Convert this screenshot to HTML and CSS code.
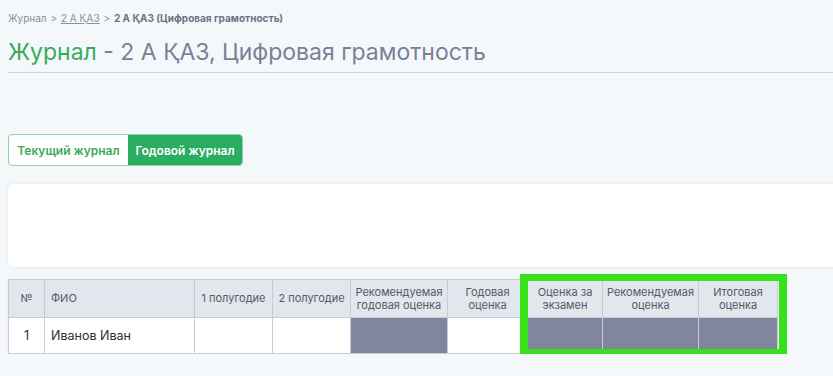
FILE: index.html
```html
<!DOCTYPE html>
<html>
	<head>
		<meta charset="utf-8" />
		<meta name="viewport" content="width=device-width, initial-scale=1">
		<title>Журнал</title>
		<link rel="stylesheet" href="styles.css">
	</head>
	<body>
		<div class="page">
			<div class="crumbs">
				<a href="">Журнал</a>
				<span class="sep">&gt;</span>
				<a href="" class="under">2 А ҚАЗ</a>
				<span class="sep">&gt;</span>
				<b>2 А ҚАЗ (Цифровая грамотность)</b>
			</div>
			<h1 class="title"><span class="green">Журнал</span> - 2 А ҚАЗ, Цифровая грамотность</h1>

			<div class="tabs">
				<a href="" class="tab">Текущий журнал</a>
				<a href="" class="tab active">Годовой журнал</a>
			</div>

			<div class="card"></div>

			<div class="wrap">
				<table class="journal">
					<colgroup>
						<col style="width:36px">
						<col style="width:150px">
						<col style="width:78px">
						<col style="width:78px">
						<col style="width:97px">
						<col style="width:80px">
						<col style="width:75px">
						<col style="width:96px">
						<col style="width:79px">
					</colgroup>
					<tr>
						<th>№</th>
						<th class="c-fio">ФИО</th>
						<th>1 полугодие</th>
						<th>2 полугодие</th>
						<th>Рекомендуемая годовая оценка</th>
						<th>Годовая оценка</th>
						<th>Оценка за экзамен</th>
						<th>Рекомендуемая оценка</th>
						<th>Итоговая оценка</th>
					</tr>
					<tr>
						<td class="c-num">1</td>
						<td class="c-fio">Иванов Иван</td>
						<td></td>
						<td></td>
						<td class="gray"></td>
						<td></td>
						<td class="gray"></td>
						<td class="gray"></td>
						<td class="gray"></td>
					</tr>
				</table>
				<div class="mark"></div>
			</div>
		</div>
	</body>
</html>
```

FILE: styles.css
```css
html,body{
	margin: 0;
	padding: 0;
}
body{
	background: #f5f8fb;
	font-family: Inter, "Noto Sans", sans-serif;
	color: #333;
	overflow: hidden;
}
a{
	text-decoration: none;
	color: inherit;
}
.page{
	padding: 12px 0 0 8px;
}
.crumbs{
	font-size: 10px;
	line-height: 12px;
	color: #8a8f9b;
}
.crumbs .sep{
	margin: 0 1px;
}
.crumbs .under{
	text-decoration: underline;
}
.crumbs b{
	color: #6e7383;
	font-weight: 700;
}
.title{
	margin: 14px 0 0;
	padding-bottom: 6px;
	font-size: 23px;
	line-height: 28px;
	font-weight: 400;
	color: #7b8096;
	border-bottom: 1px solid #cfd3db;
}
.green{
	color: #3aaa5a;
}
.tabs{
	display: flex;
	width: 235px;
	margin-top: 61px;
	height: 32px;
	box-sizing: border-box;
	border: 1px solid #8fd5a8;
	border-radius: 4px;
	overflow: hidden;
	background: #fff;
}
.tab{
	display: flex;
	align-items: center;
	justify-content: center;
	font-size: 12px;
	font-weight: 600;
	color: #3aaa5a;
	width: 119px;
}
.tab.active{
	flex: 1;
	background: #2aad61;
	color: #fff;
}
.card{
	margin-top: 18px;
	margin-right: -20px;
	height: 83px;
	background: #fff;
	border-radius: 5px;
	box-shadow: 0 0 4px rgba(0,0,0,0.08);
}
.wrap{
	position: relative;
	margin-top: 12px;
}
.journal{
	table-layout: fixed;
	width: 769px;
	border-collapse: collapse;
	background: #fff;
	font-size: 11px;
	box-shadow: 0 1px 3px rgba(0,0,0,0.08);
}
.journal th,.journal td{
	border: 1px solid #c6cbd6;
	padding: 0 3px;
}
.journal th{
	height: 37px;
	background: #e2e6ed;
	font-weight: 400;
	color: #555a66;
	line-height: 13px;
	text-align: center;
}
.journal td{
	height: 35px;
	font-size: 12.5px;
	color: #2b2e36;
}
.journal .c-fio{
	text-align: left;
	padding-left: 6px;
}
.journal td.c-num{
	text-align: center;
}
.journal .gray{
	background: #80869e;
}
.mark{
	position: absolute;
	left: 512px;
	top: -5px;
	width: 251px;
	height: 68px;
	border: 8px solid #38e21a;
	border-top-width: 7px;
}
```
